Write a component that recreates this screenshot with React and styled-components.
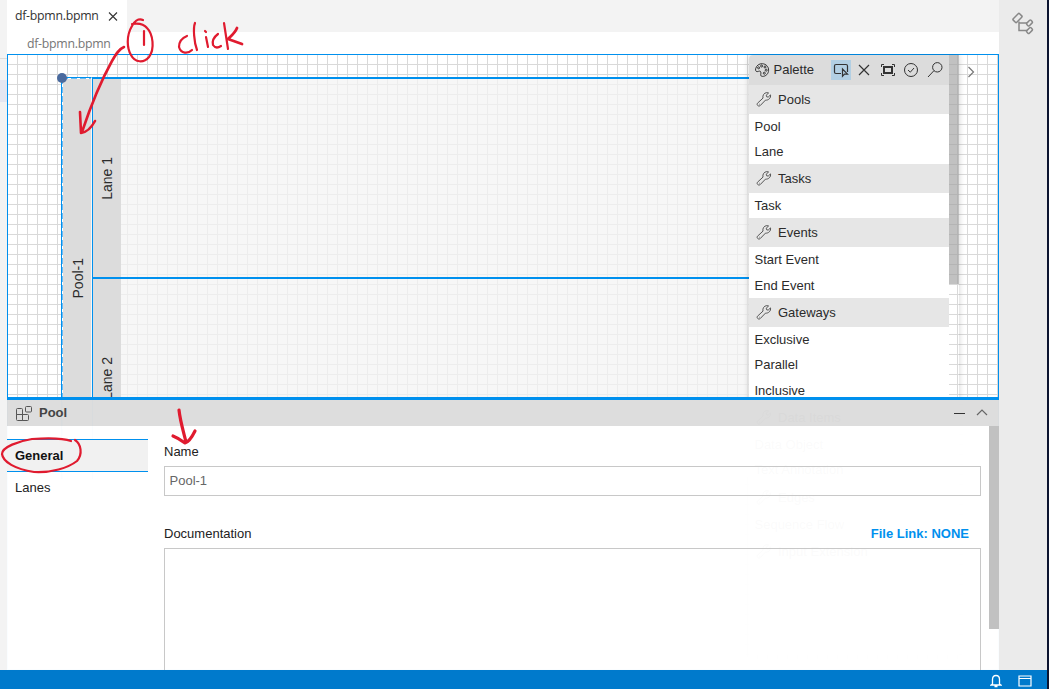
import React from 'react';
import styled, { createGlobalStyle } from 'styled-components';

const BLUE = '#0090ee';
const GRID = '#d9d9d9';

const GlobalStyle = createGlobalStyle`
  * { box-sizing: border-box; }
  body { margin: 0; overflow: hidden; }
`;

const Shell = styled.div`
  position: relative;
  display: flex;
  flex-direction: column;
  width: 1049px;
  height: 689px;
  overflow: hidden;
  border-right: 2px solid #0b1430;
  background: #fff;
  color: #222;
  font: 13px/16px "Liberation Sans", Arial, sans-serif;
`;

const Main = styled.div`
  display: flex;
  height: 670px;
`;

const LeftEdge = styled.div`
  width: 7px;
  background: #f3f3f3;
  padding-top: 58px;
`;

const LeftEdgeItem = styled.div`
  height: 44px;
  border-top: 1px solid #dcdcdc;
  background: linear-gradient(#f3f3f3 21px, #e4e6f1 21px);
`;

const Workbench = styled.div`
  display: flex;
  flex-direction: column;
  width: 992px;
`;

const TabBar = styled.div`
  display: flex;
  height: 32px;
  background: #f3f3f3;
`;

const Tab = styled.div`
  display: flex;
  align-items: center;
  width: 120px;
  padding-left: 8px;
  gap: 9px;
  background: #fff;
  color: #333;
  font: 12.3px/32px "Open Sans", "Noto Sans", sans-serif;
  letter-spacing: -0.27px;
`;

const Breadcrumb = styled.div`
  height: 22px;
  padding-left: 20px;
  color: #767676;
  font: 12.3px/23px "Open Sans", "Noto Sans", sans-serif;
  letter-spacing: -0.27px;
`;

const Editor = styled.div`
  position: relative;
  display: flex;
  height: 616px;
  overflow: hidden;
`;

const Canvas = styled.div`
  position: relative;
  flex: 1;
  border: 1px solid ${BLUE};
  background-color: #fff;
  background-image:
    linear-gradient(90deg, ${GRID} 1px, transparent 1px),
    linear-gradient(${GRID} 1px, transparent 1px);
  background-size: 10px 10px;
  background-position: 9px 9px;
`;

const PoolShape = styled.div`
  position: absolute;
  left: 53px;
  top: 22px;
  display: flex;
  width: 700px;
  height: 402px;
  border-left: 1px solid ${BLUE};
`;

const PoolHeader = styled.div`
  display: flex;
  align-items: center;
  justify-content: center;
  width: 30px;
  padding-left: 2px;
  border-top: 1px solid ${BLUE};
  border-right: 1px solid #f6f6f6;
  background:
    repeating-linear-gradient(90deg, #6dbcf5 0 6px, #fff 6px 9px) top / 100% 1px no-repeat,
    repeating-linear-gradient(#6dbcf5 0 6px, #fff 6px 9px) left / 1px 100% no-repeat,
    #dcdcdc;
`;

const Lanes = styled.div`
  flex: 1;
  border-left: 1px solid ${BLUE};
`;

const LaneShape = styled.div`
  display: flex;
  height: 200px;
  border-top: 2px solid ${BLUE};
  background: rgba(244, 244, 244, 0.74);
`;

const LaneHeader = styled.div`
  display: flex;
  align-items: center;
  justify-content: center;
  width: 28px;
  background: #dcdcdc;
`;

const VerticalText = styled.span`
  writing-mode: vertical-rl;
  transform: rotate(180deg);
  color: #2b2b2b;
  font-size: 14px;
  white-space: nowrap;
`;

const ResizeHandle = styled.div`
  position: absolute;
  left: 49px;
  top: 18px;
  width: 10px;
  height: 10px;
  border-radius: 50%;
  background: #4a6a9e;
`;

const Palette = styled.div`
  position: absolute;
  left: 741px;
  top: 0;
  width: 210px;
  height: 600px;
  display: flex;
  border-radius: 4px 0 0 0;
  box-shadow: 0 0 6px rgba(0, 0, 0, 0.18);
`;

const PaletteContent = styled.div`
  width: 200px;
  color: #2b2b2b;
`;

const PaletteHeader = styled.div`
  display: flex;
  align-items: center;
  height: 29.6px;
  padding-left: 5px;
  border-radius: 4px 0 0 0;
  background: #dcdcdc;
`;

const PaletteTitle = styled.span`
  width: 61px;
  padding-left: 3.5px;
`;

const ToolButton = styled.span`
  display: flex;
  align-items: center;
  justify-content: center;
  width: 20px;
  height: 20px;
  margin-right: 3.4px;
  background: ${(p) => (p.$active ? '#b2cfe3' : 'transparent')};
`;

const GroupHeader = styled.div`
  display: flex;
  align-items: center;
  gap: 6px;
  height: 29px;
  padding: 1px 0 0 7px;
  background: #e6e6e6;

  svg { margin-top: -2px; }
`;

const PaletteItem = styled.div`
  height: 25.3px;
  padding-left: 5.5px;
  background: #fff;
  line-height: 25px;
`;

const PaletteScrollbar = styled.div`
  width: 10px;
  height: 229px;
  background: rgba(160, 160, 160, 0.65);
`;

const ExpandButton = styled.span`
  position: absolute;
  left: 959px;
  top: 11px;
  display: flex;
`;

const Properties = styled.section`
  position: absolute;
  left: 0;
  right: 0;
  bottom: 0;
  display: flex;
  flex-direction: column;
  height: 273px;
  border-top: 3px solid ${BLUE};
`;

const PropertiesHeader = styled.div`
  display: flex;
  align-items: center;
  height: 26px;
  padding: 0 11px 1px 8px;
  gap: 6px;
  background: rgba(220, 220, 220, 0.98);
  color: #333;
`;

const PropertiesTitle = styled.span`
  flex: 1;
  font-weight: 700;
  color: #444;
`;

const HeaderActions = styled.span`
  display: flex;
  gap: 10px;
`;

const PropertiesBody = styled.div`
  display: flex;
  flex: 1;
  min-height: 0;
  background: rgba(255, 255, 255, 0.98);
`;

const SectionTabs = styled.div`
  width: 141px;
  padding-top: 13px;
`;

const SectionTab = styled.div`
  height: 33px;
  padding-left: 8px;
  border: solid ${(p) => (p.$active ? BLUE : 'transparent')};
  border-width: ${(p) => (p.$active ? '1px 0' : '0')};
  background: ${(p) => (p.$active ? '#f1f1f1' : 'transparent')};
  color: ${(p) => (p.$active ? '#111' : '#222')};
  font-weight: ${(p) => (p.$active ? 700 : 400)};
  line-height: 31px;
`;

const Form = styled.div`
  flex: 1;
  padding: 18px 8px 0 16px;
`;

const FieldLabel = styled.div`
  display: flex;
  justify-content: space-between;
  padding-right: 12px;
  margin-bottom: 6px;
`;

const FileLink = styled.span`
  color: ${BLUE};
  font-weight: 700;
`;

const TextField = styled.div`
  height: 30px;
  margin-bottom: 30px;
  padding-left: 4.5px;
  border: 1px solid #c8c8c8;
  color: #666;
  line-height: 28px;
`;

const TextArea = styled.div`
  height: 130px;
  border: 1px solid #c8c8c8;
`;

const BodyScrollbar = styled.div`
  width: 10px;
  height: 203px;
  background: #c1c1c1;
`;

const ActivityBar = styled.div`
  width: 48px;
  padding: 11px 0 0 13px;
  background: #ebebeb;
`;

const StatusBar = styled.div`
  display: flex;
  align-items: center;
  justify-content: flex-end;
  gap: 16px;
  height: 19px;
  padding: 3px 15px 0 0;
  background: #007acc;
`;

const Annotations = styled.svg`
  position: absolute;
  inset: 0;
  pointer-events: none;
`;

const Icon = ({ size = 16, h, w = 1, color = '#333', box, children }) => (
  <svg width={size} height={h || size} viewBox={box || `0 0 ${size} ${h || size}`} fill="none" stroke={color} strokeWidth={w}>
    {children}
  </svg>
);

const Wrench = () => (
  <Icon size={16} color="#555">
    <path d="M1.5 12.200 7 7.100C6.300 4.500 8 1.800 10.800 1.600L12.600 2 10.200 4.200 10.700 5.800 12.200 6.100 14.500 3.900C15.200 6.800 12.500 9.500 9.500 9.100L4.200 14.600C2.500 16 .2 13.800 1.500 12.200Z" />
    <path d="M3 13.200h.6" />
  </Icon>
);

const groups = [
  ['Pools', ['Pool', 'Lane']],
  ['Tasks', ['Task']],
  ['Events', ['Start Event', 'End Event']],
  ['Gateways', ['Exclusive', 'Parallel', 'Inclusive']],
  ['Data Items', ['Data Object', 'Text Annotation']],
  ['Edges', ['Sequence Flow']],
  ['Input Extension', []],
];

const PalettePanel = () => (
  <Palette>
    <PaletteContent>
      <PaletteHeader>
        <Icon size={16}>
          <path d="M1.600 6.800C2.400 3.300 5.400 1.500 8.400 1.700c3.600.2 6.300 3 6.200 6.500-.1 3.500-2.700 6.300-6.200 6.200-2.200-.1-1.700-1.800-1.500-3.200.2-1.700-.8-2.500-2.300-1.900-2 .9-3.500-.1-3-2.500Z" />
          <circle cx="4.600" cy="5.800" r="1" /><circle cx="7.600" cy="4" r="1" /><circle cx="11" cy="5" r="1" /><circle cx="12.200" cy="8.200" r="1" /><circle cx="10.300" cy="11.200" r="1" />
        </Icon>
        <PaletteTitle>Palette</PaletteTitle>
        <ToolButton $active>
          <Icon size={16} w={1.2}><path d="M8 11.500H3q-1.500 0-1.500-1.500V4q0-1.500 1.500-1.500h10q1.500 0 1.500 1.500v6M9.500 7v7.300l2-2.200h3Z" /></Icon>
        </ToolButton>
        <ToolButton><Icon size={14} w={1.2}><path d="m2 2 10 10M12 2 2 12" /></Icon></ToolButton>
        <ToolButton>
          <Icon size={16}>
            <path d="M4 2.500H1.500V5M12 2.500h2.500V5M4 13.500H1.500V11M12 13.500h2.500V11" />
            <rect x="4" y="5" width="8" height="6" strokeWidth="2" />
          </Icon>
        </ToolButton>
        <ToolButton><Icon size={16}><circle cx="8" cy="8" r="6.500" /><path d="m5 8 2.300 2.200L11 6" /></Icon></ToolButton>
        <ToolButton><Icon size={16}><circle cx="10.300" cy="5.300" r="4.700" /><path d="M7 8.600 1 15" /></Icon></ToolButton>
      </PaletteHeader>
      {groups.map(([name, items]) => (
        <React.Fragment key={name}>
          <GroupHeader><Wrench />{name}</GroupHeader>
          {items.map((item) => <PaletteItem key={item}>{item}</PaletteItem>)}
        </React.Fragment>
      ))}
    </PaletteContent>
    <PaletteScrollbar />
  </Palette>
);

const Diagram = () => (
  <Canvas>
    <PoolShape>
      <PoolHeader><VerticalText>Pool-1</VerticalText></PoolHeader>
      <Lanes>
        <LaneShape><LaneHeader><VerticalText>Lane 1</VerticalText></LaneHeader></LaneShape>
        <LaneShape><LaneHeader><VerticalText>Lane 2</VerticalText></LaneHeader></LaneShape>
      </Lanes>
    </PoolShape>
    <ResizeHandle />
    <PalettePanel />
    <ExpandButton><Icon size={10} h={12} color="#777" w={1.2}><path d="m1.500 1 5 5-5 5" /></Icon></ExpandButton>
  </Canvas>
);

const PropertiesPanel = () => (
  <Properties>
    <PropertiesHeader>
      <Icon size={18} color="#555">
        <path d="M1.500 5.500q0-1 1-1h4q1 0 1 1V10.500h-6ZM1.500 10.500h6V16.500h-5q-1 0-1-1ZM7.500 10.500h5q1 0 1 1V15.500q0 1-1 1h-5Z" />
        <rect x="10.500" y="2.500" width="6" height="5.500" rx="1" />
      </Icon>
      <PropertiesTitle>Pool</PropertiesTitle>
      <HeaderActions>
        <Icon size={13} h={12}><path d="M1 6.500h11" /></Icon>
        <Icon size={12} h={12} color="#666" w={1.2}><path d="m1 8 5-5 5 5" /></Icon>
      </HeaderActions>
    </PropertiesHeader>
    <PropertiesBody>
      <SectionTabs>
        <SectionTab $active>General</SectionTab>
        <SectionTab>Lanes</SectionTab>
      </SectionTabs>
      <Form>
        <FieldLabel>Name</FieldLabel>
        <TextField>Pool-1</TextField>
        <FieldLabel>Documentation<FileLink>File Link: NONE</FileLink></FieldLabel>
        <TextArea />
      </Form>
      <BodyScrollbar />
    </PropertiesBody>
  </Properties>
);

export default function App() {
  return (
    <Shell>
      <GlobalStyle />
      <Main>
        <LeftEdge><LeftEdgeItem /></LeftEdge>
        <Workbench>
          <TabBar>
            <Tab>df-bpmn.bpmn<Icon size={10} w={1.1}><path d="m1 1.500 8 8M9 1.500l-8 8" /></Icon></Tab>
          </TabBar>
          <Breadcrumb>df-bpmn.bpmn</Breadcrumb>
          <Editor>
            <Diagram />
            <PropertiesPanel />
          </Editor>
        </Workbench>
        <ActivityBar>
          <Icon size={24} color="#888" w={1.5}>
            <rect x="-4.500" y="-2.500" width="9" height="5" rx="1" transform="translate(5.500 7) rotate(-45)" />
            <rect x="-3" y="-1.800" width="6" height="3.600" rx="1" transform="translate(17.500 12) rotate(-45)" />
            <rect x="-3" y="-1.800" width="6" height="3.600" rx="1" transform="translate(17.500 19.500) rotate(-45)" />
            <path d="M7 10.500v9h8M7 12h8" />
          </Icon>
        </ActivityBar>
      </Main>
      <StatusBar>
        <Icon size={12} h={14} color="#fff" w={1.3}><path d="M2.500 10V5.500q0-4 3.500-4t3.500 4V10l1.500 1H1ZM4.500 12.500h3" /></Icon>
        <Icon size={14} h={14} color="#fff" w={1.2}><path d="M1 2h12v10H1ZM1 4.500h12" /></Icon>
      </StatusBar>
      <Annotations width="1049" height="689" fill="none" stroke="#e01b2f" strokeWidth="2.2" strokeLinecap="round" strokeLinejoin="round">
        <path d="M143 20c-5-2-9 2-11 6-6 10-5 22-1 29 4 8 13 8 18 2 6-8 4-23-2-29-4-5-9-5-15-4M144 31v14" />
        <path d="M124 47c-5 2-8 7-12 14C102 79 92 102 82 132M80 112l1 21q8-1 14-12" strokeWidth="2.600" />
        <path d="M187 36c-5 2-8 6-8 11 2 7 9 7 13 3M195 23c-2 5-1 19 2 27M205 31l1 1M206 37l2 10M218 34c-4 3-6 7-5 11 2 3 5 3 8 1M224 23l4 26" />
        <path d="M237 28c-2 5-6 8-9 11l14 5" strokeWidth="2.800" />
        <path d="M179 410c1 10 4 20 7 32M173 436c5 2 8 4 12 7 4-1 7-6 10-12" strokeWidth="3.2" />
        <path d="M71 441c-8-3-23-3-39-2-13 2-30 8-30 15 1 8 13 15 32 18 17 1 34-4 43-11 6-7 4-17-2-21" />
      </Annotations>
    </Shell>
  );
}
